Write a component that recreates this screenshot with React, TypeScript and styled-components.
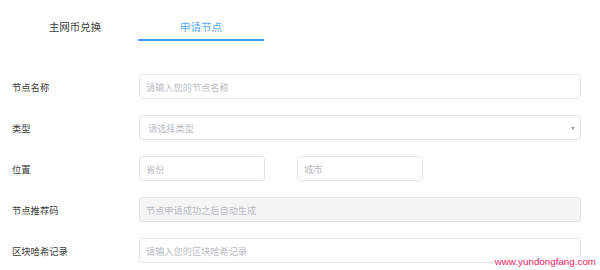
import React from "react";
import styled, { createGlobalStyle } from "styled-components";

const Global = createGlobalStyle`
  html, body { margin: 0; padding: 0; background: #fff; }
  body { font-family: "Noto Sans CJK SC", "Noto Sans", sans-serif; width: 600px; height: 270px; overflow: hidden; }
`;

const Page = styled.div`
  position: relative;
  width: 600px;
  height: 270px;
  padding: 0 19px 0 12px;
  box-sizing: border-box;
`;

const Tabs = styled.div`
  display: flex;
  height: 41px;
  margin-bottom: 33px;
`;

const Tab = styled.div<{ $active?: boolean }>`
  width: 126px;
  box-sizing: border-box;
  display: flex;
  align-items: center;
  justify-content: center;
  padding-top: 14px;
  font-size: 10.5px;
  color: ${(p) => (p.$active ? "#5aa9f5" : "#3a3a3a")};
  border-bottom: 2px solid ${(p) => (p.$active ? "#3d9cf5" : "transparent")};
  height: 41px;
`;

const Form = styled.div`
  display: flex;
  flex-direction: column;
  gap: 16px;
`;

const Row = styled.div`
  display: flex;
  align-items: center;
  height: 25px;
`;

const Label = styled.div`
  width: 127px;
  font-size: 9.3px;
  color: #3c3c3c;
`;

const Field = styled.div<{ $disabled?: boolean; $w?: number; $pad?: number }>`
  position: relative;
  box-sizing: border-box;
  height: 25px;
  ${(p) => (p.$w ? `width: ${p.$w}px;` : "flex: 1;")}
  border: 1px solid #e2e4ea;
  border-radius: 3px;
  background: ${(p) => (p.$disabled ? "#f5f5f6" : "#fff")};
  display: flex;
  align-items: center;
  padding-left: ${(p) => p.$pad ?? 6}px;
  font-size: 9.2px;
  color: #b9bcc2;
`;

const Pair = styled.div`
  display: flex;
  gap: 32px;
`;

const Arrow = styled.div`
  position: absolute;
  right: 5px;
  top: 11px;
  width: 0;
  height: 0;
  border-left: 2.5px solid transparent;
  border-right: 2.5px solid transparent;
  border-top: 3px solid #9aa0aa;
`;

const Watermark = styled.div`
  position: absolute;
  right: 3px;
  bottom: 3px;
  font-family: "Liberation Sans", Arial, sans-serif;
  font-size: 9.8px;
  color: #ee1a5e;
  background: #fff;
  line-height: 10px;
  padding: 0 1px;
`;

export default function App() {
  return (
    <>
      <Global />
      <Page>
        <Tabs>
          <Tab>主网币兑换</Tab>
          <Tab $active>申请节点</Tab>
        </Tabs>
        <Form>
          <Row>
            <Label>节点名称</Label>
            <Field>请输入您的节点名称</Field>
          </Row>
          <Row>
            <Label>类型</Label>
            <Field $pad={8}>
              请选择类型
              <Arrow />
            </Field>
          </Row>
          <Row>
            <Label>位置</Label>
            <Pair>
              <Field $w={126}>省份</Field>
              <Field $w={126}>城市</Field>
            </Pair>
          </Row>
          <Row>
            <Label>节点推荐码</Label>
            <Field $disabled>节点申请成功之后自动生成</Field>
          </Row>
          <Row>
            <Label>区块哈希记录</Label>
            <Field>请输入您的区块哈希记录</Field>
          </Row>
        </Form>
        <Watermark>www.yundongfang.com</Watermark>
      </Page>
    </>
  );
}
